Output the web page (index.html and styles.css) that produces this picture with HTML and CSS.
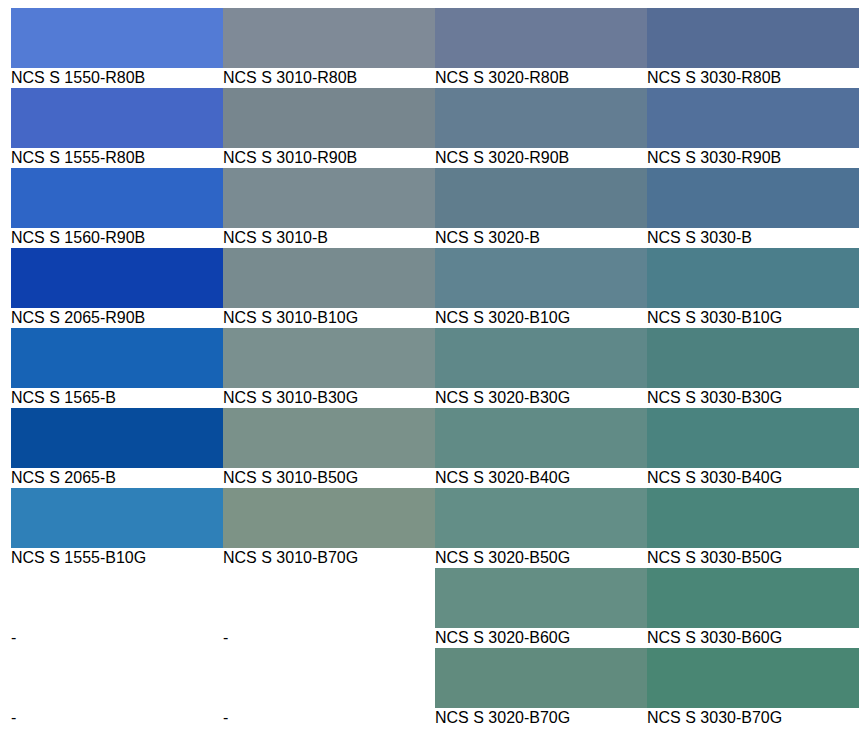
FILE: index.html
```html
<!DOCTYPE html>
<html>
<head>
<meta charset="utf-8">
<link rel="stylesheet" href="styles.css">
</head>
<body>
<div class="grid">
  <div class="cell"><div class="sw" style="background:#537bd5"></div><div class="lbl">NCS S 1550-R80B</div></div>
  <div class="cell"><div class="sw" style="background:#7f8a97"></div><div class="lbl">NCS S 3010-R80B</div></div>
  <div class="cell"><div class="sw" style="background:#6b7a98"></div><div class="lbl">NCS S 3020-R80B</div></div>
  <div class="cell"><div class="sw" style="background:#556c95"></div><div class="lbl">NCS S 3030-R80B</div></div>

  <div class="cell"><div class="sw" style="background:#4567c6"></div><div class="lbl">NCS S 1555-R80B</div></div>
  <div class="cell"><div class="sw" style="background:#77868e"></div><div class="lbl">NCS S 3010-R90B</div></div>
  <div class="cell"><div class="sw" style="background:#637d92"></div><div class="lbl">NCS S 3020-R90B</div></div>
  <div class="cell"><div class="sw" style="background:#52709b"></div><div class="lbl">NCS S 3030-R90B</div></div>

  <div class="cell"><div class="sw" style="background:#2e65c6"></div><div class="lbl">NCS S 1560-R90B</div></div>
  <div class="cell"><div class="sw" style="background:#7a8b92"></div><div class="lbl">NCS S 3010-B</div></div>
  <div class="cell"><div class="sw" style="background:#607d8d"></div><div class="lbl">NCS S 3020-B</div></div>
  <div class="cell"><div class="sw" style="background:#4d7294"></div><div class="lbl">NCS S 3030-B</div></div>

  <div class="cell"><div class="sw" style="background:#0e40ae"></div><div class="lbl">NCS S 2065-R90B</div></div>
  <div class="cell"><div class="sw" style="background:#788b8f"></div><div class="lbl">NCS S 3010-B10G</div></div>
  <div class="cell"><div class="sw" style="background:#5f8391"></div><div class="lbl">NCS S 3020-B10G</div></div>
  <div class="cell"><div class="sw" style="background:#4b7e8b"></div><div class="lbl">NCS S 3030-B10G</div></div>

  <div class="cell"><div class="sw" style="background:#1763b5"></div><div class="lbl">NCS S 1565-B</div></div>
  <div class="cell"><div class="sw" style="background:#7a908f"></div><div class="lbl">NCS S 3010-B30G</div></div>
  <div class="cell"><div class="sw" style="background:#5f8889"></div><div class="lbl">NCS S 3020-B30G</div></div>
  <div class="cell"><div class="sw" style="background:#4d817f"></div><div class="lbl">NCS S 3030-B30G</div></div>

  <div class="cell"><div class="sw" style="background:#074c9c"></div><div class="lbl">NCS S 2065-B</div></div>
  <div class="cell"><div class="sw" style="background:#7a918a"></div><div class="lbl">NCS S 3010-B50G</div></div>
  <div class="cell"><div class="sw" style="background:#618b86"></div><div class="lbl">NCS S 3020-B40G</div></div>
  <div class="cell"><div class="sw" style="background:#4a837f"></div><div class="lbl">NCS S 3030-B40G</div></div>

  <div class="cell"><div class="sw" style="background:#2f80b8"></div><div class="lbl">NCS S 1555-B10G</div></div>
  <div class="cell"><div class="sw" style="background:#7d9386"></div><div class="lbl">NCS S 3010-B70G</div></div>
  <div class="cell"><div class="sw" style="background:#638e87"></div><div class="lbl">NCS S 3020-B50G</div></div>
  <div class="cell"><div class="sw" style="background:#4a857b"></div><div class="lbl">NCS S 3030-B50G</div></div>

  <div class="cell"><div class="sw"></div><div class="lbl">-</div></div>
  <div class="cell"><div class="sw"></div><div class="lbl">-</div></div>
  <div class="cell"><div class="sw" style="background:#648e84"></div><div class="lbl">NCS S 3020-B60G</div></div>
  <div class="cell"><div class="sw" style="background:#4a8677"></div><div class="lbl">NCS S 3030-B60G</div></div>

  <div class="cell"><div class="sw"></div><div class="lbl">-</div></div>
  <div class="cell"><div class="sw"></div><div class="lbl">-</div></div>
  <div class="cell"><div class="sw" style="background:#618b7e"></div><div class="lbl">NCS S 3020-B70G</div></div>
  <div class="cell"><div class="sw" style="background:#498673"></div><div class="lbl">NCS S 3030-B70G</div></div>
</div>
</body>
</html>
```
FILE: styles.css
```css
html, body {
  background: #ffffff;
}
body {
  margin: 8px 9px 0 11px;
  font-family: "Liberation Sans", Arial, sans-serif;
  font-size: 16px;
  color: #000000;
}
.grid {
  display: grid;
  grid-template-columns: repeat(4, 212px);
}
.cell {
  display: flex;
  flex-direction: column;
}
.sw {
  height: 60px;
}
.lbl {
  height: 20px;
  line-height: 20px;
  white-space: nowrap;
}
```
